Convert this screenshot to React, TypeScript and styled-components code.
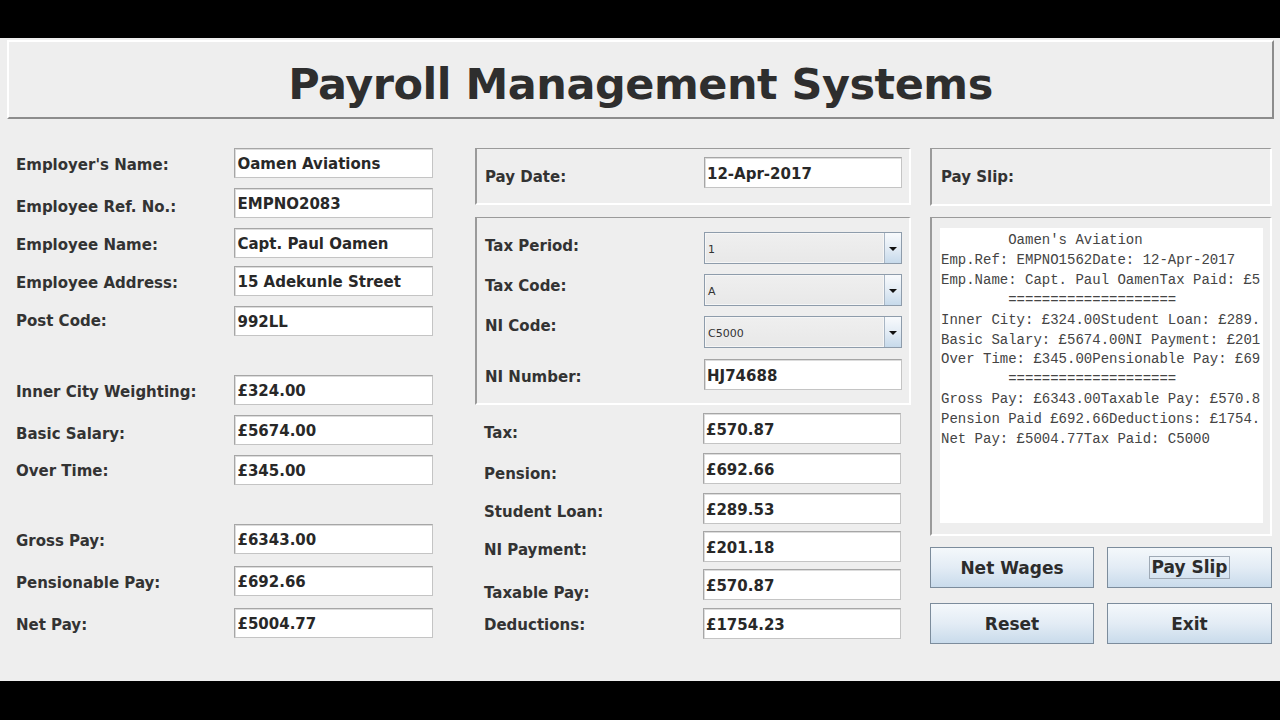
import React from 'react';
import styled, { createGlobalStyle } from 'styled-components';

const Global = createGlobalStyle`
  html, body { margin: 0; padding: 0; background: #000; }
  body { font-family: "DejaVu Sans", Verdana, sans-serif; }
  * { box-sizing: border-box; }
`;

const Screen = styled.div`
  width: 1280px;
  height: 720px;
  background: #000;
  padding-top: 38px;
`;

const Window = styled.div`
  height: 643px;
  background: #eeeeee;
  padding: 2px 6px 0 7px;
  display: flex;
  flex-direction: column;
`;

const TitlePanel = styled.div`
  height: 79px;
  border: 2px solid;
  border-color: #ffffff #8c8c8c #8c8c8c #ffffff;
  display: flex;
  align-items: center;
  justify-content: center;
  padding-top: 9px;
`;

const Title = styled.h1`
  margin: 0;
  font-size: 43px;
  letter-spacing: -0.5px;
  font-weight: bold;
  color: #2e2e2e;
`;

const Main = styled.div`
  display: flex;
  margin-top: 29px;
  padding-left: 9px;
`;

const LeftCol = styled.div`
  width: 417px;
  display: flex;
  flex-direction: column;
`;

const MidCol = styled.div`
  width: 436px;
  margin-left: 42px;
  display: flex;
  flex-direction: column;
`;

const RightCol = styled.div`
  width: 342px;
  margin-left: 19px;
  display: flex;
  flex-direction: column;
`;

const Row = styled.div<{ $top: number; $indent?: number }>`
  display: flex;
  align-items: center;
  margin-top: ${p => p.$top}px;
  padding-left: ${p => p.$indent ?? 0}px;
`;

const Label = styled.div<{ $w: number; $shift?: number }>`
  width: ${p => p.$w}px;
  font-size: 15px;
  font-weight: bold;
  color: #333;
  white-space: nowrap;
  position: relative;
  top: ${p => p.$shift ?? 2}px;
`;

const Field = styled.div<{ $w: number; $h: number }>`
  width: ${p => p.$w}px;
  height: ${p => p.$h}px;
  background: #fff;
  border: 1px solid #a6a6a6;
  border-right-color: #c4c4c4;
  border-bottom-color: #c4c4c4;
  box-shadow: inset 1px 1px 0 #dcdcdc;
  font-size: 15px;
  font-weight: bold;
  color: #282828;
  padding: 2px 0 0 2px;
  display: flex;
  align-items: center;
  white-space: nowrap;
`;

const SunkPanel = styled.div<{ $h: number; $top?: number }>`
  height: ${p => p.$h}px;
  margin-top: ${p => p.$top ?? 0}px;
  border-style: solid;
  border-width: 1px 2px 2px 2px;
  border-color: #9a9a9a #ffffff #ffffff #9a9a9a;
  display: flex;
  flex-direction: column;
`;

const Combo = styled.div`
  width: 198px;
  height: 32px;
  border: 1px solid #8e9cab;
  background: linear-gradient(#efefef, #e8e8e8);
  display: flex;
  align-items: stretch;
`;

const ComboText = styled.div`
  flex: 1;
  display: flex;
  align-items: center;
  padding-left: 2px;
  padding-top: 2px;
  font-size: 11px;
  color: #333;
  border: 1px solid #f6f6f6;
`;

const ComboArrow = styled.div`
  width: 17px;
  border-left: 1px solid #a9b6c4;
  background: linear-gradient(#f8fafc, #e3ecf5 50%, #c7daeb);
  display: flex;
  align-items: center;
  justify-content: center;
  &::after {
    content: '';
    width: 0;
    height: 0;
    border-left: 4px solid transparent;
    border-right: 4px solid transparent;
    border-top: 4px solid #111;
    margin-top: 2px;
  }
`;

const SlipArea = styled.div`
  height: 295px;
  margin: 10px 7px 0 8px;
  background: #fff;
  overflow: hidden;
  padding: 3px 0 0 1px;
`;

const SlipText = styled.pre`
  margin: 0;
  font-family: "Liberation Mono", "Courier New", monospace;
  font-size: 14px;
  line-height: 19.9px;
  color: #444;
  white-space: pre;
`;

const ButtonRow = styled.div<{ $top: number }>`
  display: flex;
  gap: 13px;
  margin-top: ${p => p.$top}px;
`;

const Button = styled.button<{ $w: number }>`
  width: ${p => p.$w}px;
  height: 41px;
  border: 1px solid #7c8c9c;
  border-radius: 0;
  background: linear-gradient(#f4f8fb, #e3ecf5 50%, #c9dbeb);
  font-family: "DejaVu Sans", Verdana, sans-serif;
  font-size: 17px;
  font-weight: bold;
  color: #2c2c2c;
  padding: 0;
  display: flex;
  align-items: center;
  justify-content: center;
`;

const Focus = styled.span`
  border: 1px solid #9ea9b5;
  padding: 2px 1px;
  line-height: 1;
`;

const left: [string, string, number, number?][] = [
  ["Employer's Name:", 'Oamen Aviations', 0],
  ['Employee Ref. No.:', 'EMPNO2083', 10, 4],
  ['Employee Name:', 'Capt. Paul Oamen', 10],
  ['Employee Address:', '15 Adekunle Street', 8],
  ['Post Code:', '992LL', 10, 0],
  ['Inner City Weighting:', '£324.00', 39],
  ['Basic Salary:', '£5674.00', 10, 4],
  ['Over Time:', '£345.00', 10, 1],
  ['Gross Pay:', '£6343.00', 39],
  ['Pensionable Pay:', '£692.66', 12],
  ['Net Pay:', '£5004.77', 12],
];

const mid: [string, string, number, number][] = [
  ['Tax:', '£570.87', 8, 4],
  ['Pension:', '£692.66', 9, 5],
  ['Student Loan:', '£289.53', 9, 3],
  ['NI Payment:', '£201.18', 7, 3],
  ['Taxable Pay:', '£570.87', 7, 8],
  ['Deductions:', '£1754.23', 8, 1],
];

const combos: [string, string, number, number][] = [
  ['Tax Period:', '1', 14, -2],
  ['Tax Code:', 'A', 10, -4],
  ['NI Code:', 'C5000', 10, -6],
];

const slip = [
  "        Oamen's Aviation",
  'Emp.Ref: EMPNO1562Date: 12-Apr-2017',
  'Emp.Name: Capt. Paul OamenTax Paid: £5',
  '        ====================',
  'Inner City: £324.00Student Loan: £289.',
  'Basic Salary: £5674.00NI Payment: £201',
  'Over Time: £345.00Pensionable Pay: £69',
  '        ====================',
  'Gross Pay: £6343.00Taxable Pay: £570.8',
  'Pension Paid £692.66Deductions: £1754.',
  'Net Pay: £5004.77Tax Paid: C5000',
].join('\n');

export default function App() {
  return (
    <Screen>
      <Global />
      <Window>
        <TitlePanel>
          <Title>Payroll Management Systems</Title>
        </TitlePanel>
        <Main>
          <LeftCol>
            {left.map(([l, v, t, s]) => (
              <Row key={l} $top={t}>
                <Label $w={219} $shift={s}>{l}</Label>
                <Field $w={199} $h={30}>{v}</Field>
              </Row>
            ))}
          </LeftCol>
          <MidCol>
            <SunkPanel $h={57}>
              <Row $top={8} $indent={8}>
                <Label $w={219} $shift={4}>Pay Date:</Label>
                <Field $w={198} $h={31}>12-Apr-2017</Field>
              </Row>
            </SunkPanel>
            <SunkPanel $h={188} $top={12}>
              {combos.map(([l, v, t, s]) => (
                <Row key={l} $top={t} $indent={8}>
                  <Label $w={219} $shift={s}>{l}</Label>
                  <Combo>
                    <ComboText>{v}</ComboText>
                    <ComboArrow />
                  </Combo>
                </Row>
              ))}
              <Row $top={11} $indent={8}>
                <Label $w={219} $shift={2}>NI Number:</Label>
                <Field $w={198} $h={31}>HJ74688</Field>
              </Row>
            </SunkPanel>
            {mid.map(([l, v, t, s]) => (
              <Row key={l} $top={t} $indent={9}>
                <Label $w={219} $shift={s}>{l}</Label>
                <Field $w={198} $h={31}>{v}</Field>
              </Row>
            ))}
          </MidCol>
          <RightCol>
            <SunkPanel $h={58}>
              <Row $top={19} $indent={9}>
                <Label $w={200} $shift={0}>Pay Slip:</Label>
              </Row>
            </SunkPanel>
            <SunkPanel $h={319} $top={11}>
              <SlipArea>
                <SlipText>{slip}</SlipText>
              </SlipArea>
            </SunkPanel>
            <ButtonRow $top={11}>
              <Button $w={164}>Net Wages</Button>
              <Button $w={165}><Focus>Pay Slip</Focus></Button>
            </ButtonRow>
            <ButtonRow $top={15}>
              <Button $w={164}>Reset</Button>
              <Button $w={165}>Exit</Button>
            </ButtonRow>
          </RightCol>
        </Main>
      </Window>
    </Screen>
  );
}
